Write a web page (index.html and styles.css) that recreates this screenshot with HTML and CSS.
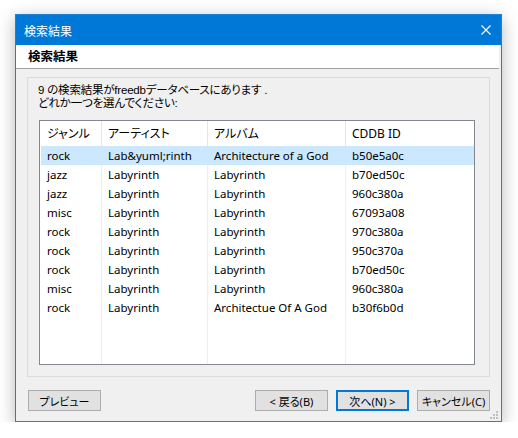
FILE: index.html
```html
<!DOCTYPE html>
<html lang="ja">
<head>
    <meta charset="UTF-8">
    <meta name="viewport" content="width=device-width, initial-scale=1.0">
    <title>検索結果</title>
    <link rel="stylesheet" href="styles.css">
</head>
<body>
    <div class="window">
        <div class="titlebar">
            <span class="title">検索結果</span>
            <svg class="close" width="10" height="10" viewBox="0 0 10 10">
                <path d="M0.5 0.5 L9.5 9.5 M9.5 0.5 L0.5 9.5" stroke="#fff" stroke-width="1.1" fill="none"/>
            </svg>
        </div>
        <div class="header">検索結果</div>
        <div class="content">
            <div class="panel">
                <p class="message">9 の検索結果がfreedbデータベースにあります .</p>
                <p class="message">どれか一つを選んでください:</p>
                <div class="list">
                    <div class="list-head">
                        <div class="cell">ジャンル</div>
                        <div class="cell">アーティスト</div>
                        <div class="cell">アルバム</div>
                        <div class="cell">CDDB ID</div>
                    </div>
                    <div class="list-body">
                        <div class="row selected">
                            <div class="cell">rock</div><div class="cell">Lab&amp;yuml;rinth</div><div class="cell">Architecture of a God</div><div class="cell">b50e5a0c</div>
                        </div>
                        <div class="row">
                            <div class="cell">jazz</div><div class="cell">Labyrinth</div><div class="cell">Labyrinth</div><div class="cell">b70ed50c</div>
                        </div>
                        <div class="row">
                            <div class="cell">jazz</div><div class="cell">Labyrinth</div><div class="cell">Labyrinth</div><div class="cell">960c380a</div>
                        </div>
                        <div class="row">
                            <div class="cell">misc</div><div class="cell">Labyrinth</div><div class="cell">Labyrinth</div><div class="cell">67093a08</div>
                        </div>
                        <div class="row">
                            <div class="cell">rock</div><div class="cell">Labyrinth</div><div class="cell">Labyrinth</div><div class="cell">970c380a</div>
                        </div>
                        <div class="row">
                            <div class="cell">rock</div><div class="cell">Labyrinth</div><div class="cell">Labyrinth</div><div class="cell">950c370a</div>
                        </div>
                        <div class="row">
                            <div class="cell">rock</div><div class="cell">Labyrinth</div><div class="cell">Labyrinth</div><div class="cell">b70ed50c</div>
                        </div>
                        <div class="row">
                            <div class="cell">misc</div><div class="cell">Labyrinth</div><div class="cell">Labyrinth</div><div class="cell">960c380a</div>
                        </div>
                        <div class="row">
                            <div class="cell">rock</div><div class="cell">Labyrinth</div><div class="cell">Architectue Of A God</div><div class="cell">b30f6b0d</div>
                        </div>
                    </div>
                </div>
            </div>
            <div class="buttons">
                <button class="btn">プレビュー</button>
                <div class="spacer"></div>
                <button class="btn">&lt; 戻る(B)</button>
                <button class="btn default">次へ(N) &gt;</button>
                <button class="btn">キャンセル(C)</button>
            </div>
            <svg class="grip" width="8" height="8" viewBox="0 0 8 8">
                <rect x="6" y="0" width="2" height="2" fill="#bfbfbf"/>
                <rect x="3" y="3" width="2" height="2" fill="#bfbfbf"/>
                <rect x="6" y="3" width="2" height="2" fill="#bfbfbf"/>
                <rect x="0" y="6" width="2" height="2" fill="#bfbfbf"/>
                <rect x="3" y="6" width="2" height="2" fill="#bfbfbf"/>
                <rect x="6" y="6" width="2" height="2" fill="#bfbfbf"/>
            </svg>
        </div>
    </div>
</body>
</html>
```

FILE: styles.css
```css
body {
    margin: 0;
    padding: 14px 0 0 15px;
    background-color: #ffffff;
    font-family: "Noto Sans", "Noto Sans CJK JP", sans-serif;
    font-size: 12px;
    font-feature-settings: "palt";
    color: #000;
}

.window {
    width: 487px;
    height: 408px;
    box-sizing: border-box;
    border: 1px solid #1883d7;
    background-color: #f0f0f0;
    box-shadow: 0 4px 16px rgba(0, 0, 0, 0.28);
    display: flex;
    flex-direction: column;
}

.titlebar {
    height: 30px;
    background-color: #0078d7;
    color: #fff;
    display: flex;
    align-items: center;
    padding: 0 10px 0 8px;
}

.title {
    flex: 1;
    font-family: "Noto Sans CJK JP", sans-serif;
    font-size: 12px;
}

.header {
    height: 23px;
    line-height: 23px;
    background-color: #fff;
    border-bottom: 1px solid #a0a0a0;
    margin-right: 2px;
    padding-left: 12px;
    font-weight: bold;
    font-size: 12.5px;
}

.content {
    flex: 1;
    display: flex;
    flex-direction: column;
    position: relative;
}

.panel {
    margin: 8px 0 0 11px;
    width: 463px;
    height: 300px;
    box-sizing: border-box;
    border: 1px solid #dcdcdc;
    padding: 6px 0 0 10px;
}

.message {
    margin: 0;
    height: 13px;
    line-height: 13px;
    font-family: "Liberation Sans", "Noto Sans CJK JP", sans-serif;
    font-size: 11.5px;
    letter-spacing: -0.2px;
}

.list {
    margin: 10px 0 0 1px;
    width: 436px;
    height: 245px;
    box-sizing: border-box;
    border: 1px solid #828790;
    background-color: #fff;
    display: flex;
    flex-direction: column;
}

.list-head,
.row {
    display: grid;
    grid-template-columns: 62px 106px 138px 1fr;
}

.list-head {
    height: 25px;
    line-height: 25px;
}

.list-head .cell {
    border-right: 1px solid #e5e5e5;
}

.list-head .cell:last-child {
    border-right: none;
}

.list-body {
    flex: 1;
    background-image:
        linear-gradient(#e9eff8, #e9eff8),
        linear-gradient(#e9eff8, #e9eff8),
        linear-gradient(#e9eff8, #e9eff8);
    background-size: 1px 100%;
    background-repeat: no-repeat;
    background-position: 61px 0, 167px 0, 305px 0;
}

.row {
    height: 19px;
    line-height: 19px;
    font-size: 11.5px;
}

.row.selected {
    background-image: linear-gradient(to right, transparent 1px, #cce8ff 1px);
}

.cell {
    padding-left: 6px;
    white-space: nowrap;
    overflow: hidden;
}

.cell:first-child {
    padding-left: 7px;
}

.buttons {
    display: flex;
    gap: 8px;
    margin: 13px 11px 0 12px;
}

.spacer {
    flex: 1;
}

.btn {
    width: 73px;
    height: 21px;
    padding: 0;
    border: 1px solid #adadad;
    background-color: #e1e1e1;
    font-family: "Noto Sans", "Noto Sans CJK JP", sans-serif;
    font-size: 11px;
    font-feature-settings: "palt";
    color: #000;
}

.btn.default {
    border: 2px solid #0078d7;
}

.grip {
    position: absolute;
    right: 3px;
    bottom: 2px;
}
```
